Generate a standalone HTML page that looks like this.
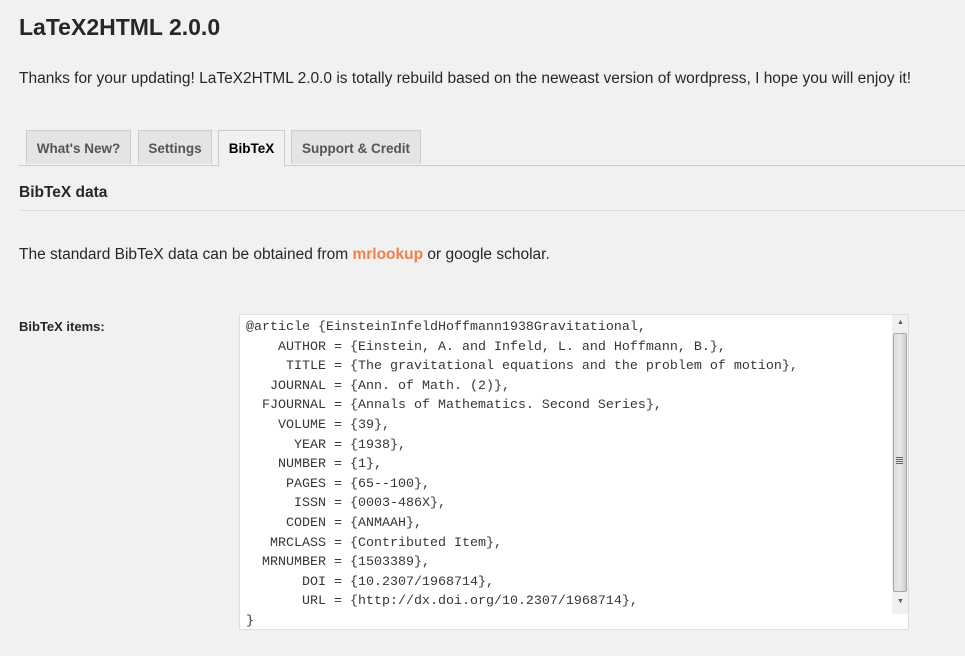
<!DOCTYPE html>
<html><head><style>
body{margin:0;background:#f1f1f1;font-family:"Liberation Sans",sans-serif;color:#23282d;width:965px;height:656px;overflow:hidden;position:relative}
.a{position:absolute;white-space:nowrap}
h1{position:absolute;left:19px;top:14px;margin:0;font-size:23px;font-weight:bold;color:#23282d}
.tab{position:absolute;top:130px;height:34px;border:1px solid #ccc;border-bottom:none;background:#e4e4e4;color:#555;font-weight:bold;font-size:13.5px;line-height:36px;text-align:center;box-sizing:border-box}
.tab.act{background:#f1f1f1;color:#000;height:36px}
pre{position:absolute;left:246px;top:318px;margin:0;font-family:"Liberation Mono",monospace;font-size:13.33px;line-height:19.6px;color:#32373c}
</style></head><body>
<h1>LaTeX2HTML 2.0.0</h1>
<div class="a" style="left:19px;top:70px;font-size:15.5px;">Thanks for your updating! LaTeX2HTML 2.0.0 is totally rebuild based on the neweast version of wordpress, I hope you will enjoy it!</div>
<div class="a" style="left:19px;top:165px;width:946px;height:1px;background:#ccc"></div>
<div class="tab" style="left:26px;width:105px">What's New?</div>
<div class="tab" style="left:138px;width:74px">Settings</div>
<div class="tab act" style="left:218px;width:67px">BibTeX</div>
<div class="tab" style="left:291px;width:130px">Support &amp; Credit</div>
<div class="a" style="left:19px;top:184px;font-size:15.5px;font-weight:bold">BibTeX data</div>
<div class="a" style="left:19px;top:210px;width:946px;height:1px;background:#ddd"></div>
<div class="a" style="left:19px;top:246px;font-size:15.5px">The standard BibTeX data can be obtained from <b style="color:#f0804a">mrlookup</b> or google scholar.</div>
<div class="a" style="left:19px;top:319px;font-size:13px;font-weight:bold">BibTeX items:</div>
<div class="a" style="left:239px;top:314px;width:670px;height:316px;background:#fff;border:1px solid #ddd;box-sizing:border-box"></div>
<div class="a" style="left:892px;top:315px;width:16px;height:299px;background:#f0f0f0"></div>
<div class="a" style="left:893px;top:333px;width:14px;height:259px;background:linear-gradient(90deg,#ddd,#e8e8e8 50%,#ccc);border:1px solid #a8a8a8;border-radius:2px;box-sizing:border-box"></div>
<div class="a" style="left:897px;top:319px;font-size:7px;color:#555">▲</div>
<div class="a" style="left:897px;top:598px;font-size:7px;color:#555">▼</div>
<div class="a" style="left:896px;top:457px;width:7px;height:7px;background:repeating-linear-gradient(#666 0 1px,transparent 1px 2px)"></div>
<pre>@article {EinsteinInfeldHoffmann1938Gravitational,
    AUTHOR = {Einstein, A. and Infeld, L. and Hoffmann, B.},
     TITLE = {The gravitational equations and the problem of motion},
   JOURNAL = {Ann. of Math. (2)},
  FJOURNAL = {Annals of Mathematics. Second Series},
    VOLUME = {39},
      YEAR = {1938},
    NUMBER = {1},
     PAGES = {65--100},
      ISSN = {0003-486X},
     CODEN = {ANMAAH},
   MRCLASS = {Contributed Item},
  MRNUMBER = {1503389},
       DOI = {10.2307/1968714},
       URL = {http://dx.doi.org/10.2307/1968714},
}</pre>
</body></html>
